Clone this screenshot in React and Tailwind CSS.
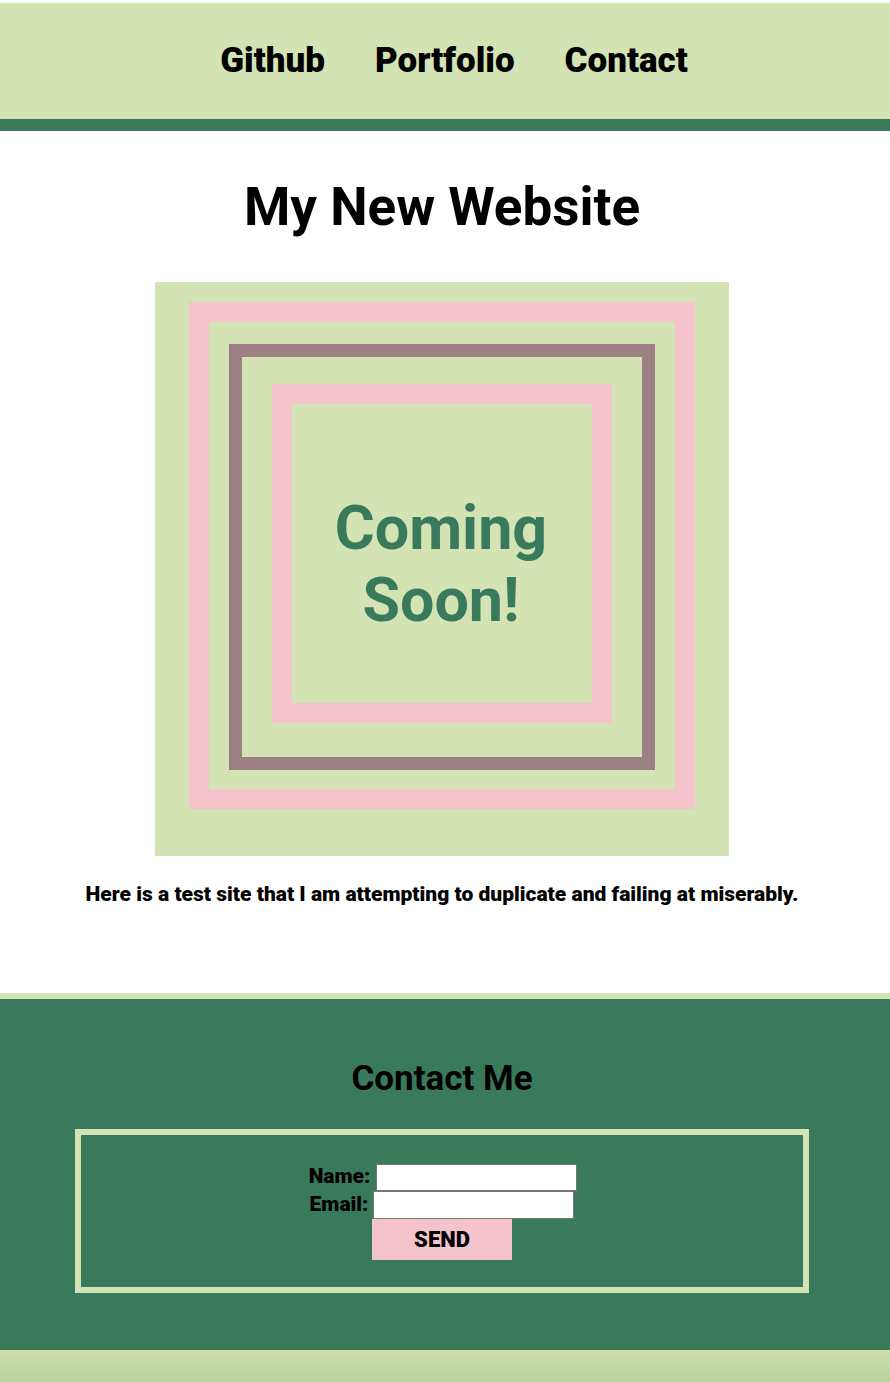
export default function App() {
  return (
    <div className="bg-white w-[890px] min-h-[1382px] flex flex-col" style={{ fontFamily: "Roboto, 'Liberation Sans', sans-serif" }}>
      <div className="h-[3px] bg-white" />
      <header className="bg-[#d3e3b3] h-[116px] flex items-center justify-center gap-[50px] pl-[18px] text-[35px] font-black text-black">
        <span>Github</span>
        <span>Portfolio</span>
        <span>Contact</span>
      </header>
      <div className="h-[12px] bg-[#3a7a5c]" />
      <main className="flex flex-col items-center pr-[6px]">
        <h1 className="mt-[44px] text-[53px] leading-[64px] font-bold text-black">My New Website</h1>
        <div className="mt-[43px] w-[574px] h-[574px] bg-[#d3e3b3] flex justify-center pt-[20px]">
          <div className="w-[506px] h-[507px] border-[20px] border-[#f4c3cb] flex justify-center pt-[22px]">
            <div className="w-[426px] h-[426px] border-[13px] border-[#9d8083] flex justify-center pt-[27px]">
              <div className="w-[340px] h-[339px] border-[20px] border-[#f4c3cb] flex items-center justify-center pt-[20px] pr-[2px]">
                <p className="text-[61px] leading-[72px] font-bold text-[#3a7a5c] text-center">Coming<br />Soon!</p>
              </div>
            </div>
          </div>
        </div>
        <p className="mt-[26px] text-[21px] leading-[24px] font-black text-black">Here is a test site that I am attempting to duplicate and failing at miserably.</p>
      </main>
      <div className="mt-[87px] h-[6px] bg-[#d3e3b3]" />
      <section className="bg-[#3a7a5c] h-[351px] flex flex-col items-center pr-[6px]">
        <h2 className="mt-[59px] text-[35px] leading-[42px] font-bold text-black">Contact Me</h2>
        <div className="mt-[29px] w-[734px] h-[164px] border-[6px] border-[#d3e3b3] flex flex-col items-center pt-[28px]">
          <div className="flex items-center h-[28px] pl-[2px]">
            <label className="text-[21px] font-black text-black mr-[6px]">Name:</label>
            <input className="w-[201px] h-[27px] bg-white border border-[#767676]" />
          </div>
          <div className="flex items-center h-[28px]">
            <label className="text-[21px] font-black text-black mr-[5px]">Email:</label>
            <input className="w-[201px] h-[28px] bg-white border border-[#767676]" />
          </div>
          <button className="w-[140px] h-[41px] bg-[#f4c3cb] text-[22px] font-black text-black">SEND</button>
        </div>
      </section>
      <footer className="h-[32px] bg-gradient-to-b from-[#cedead] to-[#bccf9f]" />
    </div>
  );
}
